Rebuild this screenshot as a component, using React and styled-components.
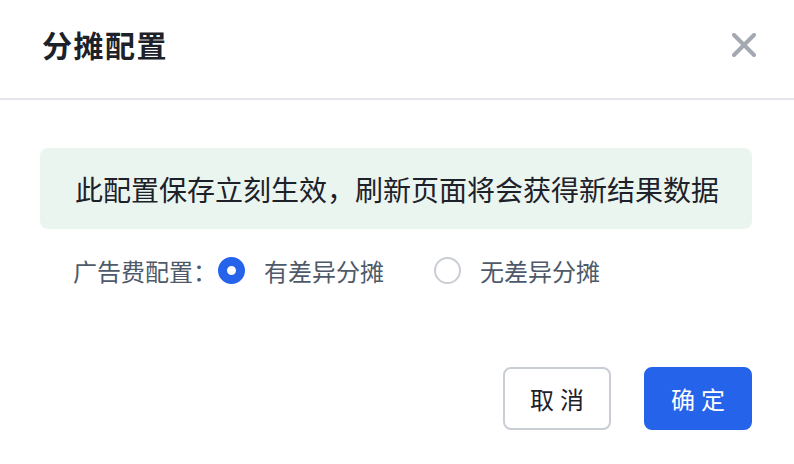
import React, { useState } from 'react'
import styled, { createGlobalStyle } from 'styled-components'

const GlobalStyle = createGlobalStyle`
  html, body {
    margin: 0;
    padding: 0;
    background: #ffffff;
  }
  body {
    font-family: "Noto Sans CJK SC", "Noto Sans", sans-serif;
  }
`

const Dialog = styled.div`
  width: 794px;
  height: 464px;
  background: #fff;
  display: flex;
  flex-direction: column;
  box-sizing: border-box;
`

const Header = styled.div`
  height: 98px;
  border-bottom: 2px solid #e5e6eb;
  display: flex;
  align-items: center;
  justify-content: space-between;
  padding: 0 38px 0 42px;
`

const Title = styled.h2`
  margin: 0;
  font-size: 30px;
  font-weight: 700;
  letter-spacing: 1.5px;
  color: #1d2129;
  line-height: 1;
  padding-bottom: 10px;
`

const CloseButton = styled.button`
  width: 24px;
  height: 24px;
  padding: 0;
  border: none;
  background: none;
  cursor: pointer;
  display: flex;
  align-items: center;
  justify-content: center;
  margin-bottom: 8px;
`

const Body = styled.div`
  flex: 1;
  padding: 48px 42px 0 40px;
  display: flex;
  flex-direction: column;
`

const Alert = styled.div`
  height: 81px;
  box-sizing: border-box;
  background: #ebf5ef;
  border-radius: 8px;
  padding: 0 35px;
  display: flex;
  align-items: center;
  font-size: 28px;
  color: #1d2129;
  white-space: nowrap;
`

const FieldRow = styled.div`
  display: flex;
  align-items: center;
  height: 40px;
  margin-top: 21px;
  padding-left: 33px;
`

const FieldLabel = styled.span`
  font-size: 24px;
  color: #4e5969;
  margin-right: 1px;
`

const Option = styled.label`
  display: flex;
  align-items: center;
  gap: 19px;
  margin-right: 50px;
  cursor: pointer;
  font-size: 24px;
  color: #4e5969;
`

const RadioDot = styled.span`
  width: 27px;
  height: 27px;
  box-sizing: border-box;
  border-radius: 50%;
  border: ${p => (p.$checked ? '9px solid #2563eb' : '2px solid #c9cdd4')};
  background: #fff;
`

const Footer = styled.div`
  display: flex;
  justify-content: flex-end;
  gap: 33px;
  padding: 0 42px 34px 0;
`

const Button = styled.button`
  width: 108px;
  height: 63px;
  box-sizing: border-box;
  border-radius: 8px;
  font-family: inherit;
  font-size: 24px;
  letter-spacing: 6px;
  padding: 0 0 0 6px;
  cursor: pointer;
  border: ${p => (p.$primary ? '2px solid #2563eb' : '2px solid #c9cdd4')};
  background: ${p => (p.$primary ? '#2563eb' : '#fff')};
  color: ${p => (p.$primary ? '#fff' : '#1d2129')};
`

export default function App() {
  const [mode, setMode] = useState('diff')
  const options = [
    { key: 'diff', label: '有差异分摊' },
    { key: 'same', label: '无差异分摊' },
  ]

  return (
    <Dialog>
      <GlobalStyle />
      <Header>
        <Title>分摊配置</Title>
        <CloseButton aria-label="close">
          <svg width="24" height="24" viewBox="0 0 24 24">
            <path d="M2 2L22 22M22 2L2 22" stroke="#a4a8b0" strokeWidth="4" strokeLinecap="round" />
          </svg>
        </CloseButton>
      </Header>
      <Body>
        <Alert>此配置保存立刻生效，刷新页面将会获得新结果数据</Alert>
        <FieldRow>
          <FieldLabel>广告费配置：</FieldLabel>
          {options.map(o => (
            <Option key={o.key} onClick={() => setMode(o.key)}>
              <RadioDot $checked={mode === o.key} />
              {o.label}
            </Option>
          ))}
        </FieldRow>
      </Body>
      <Footer>
        <Button>取消</Button>
        <Button $primary>确定</Button>
      </Footer>
    </Dialog>
  )
}
